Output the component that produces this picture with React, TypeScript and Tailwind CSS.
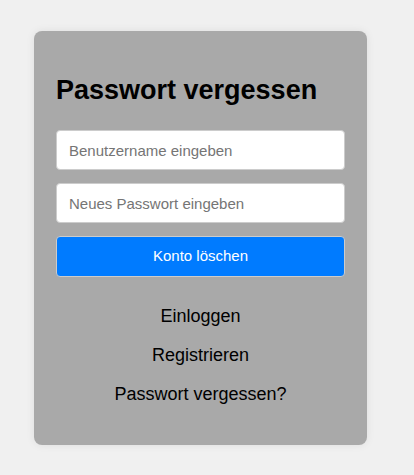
import React from 'react';

const font = { fontFamily: '"Liberation Sans", Arial, sans-serif' };

export default function App() {
  return (
    <div className="min-h-screen bg-[#f0f0f0] pt-[31px] pl-[34px]" style={font}>
      <div className="w-[333px] h-[414px] rounded-lg bg-[#a9a9a9] px-[22px] pt-[44px] shadow-[0_0_8px_rgba(0,0,0,0.08)]">
        <h2 className="text-[27px] leading-[31px] font-bold text-black">Passwort vergessen</h2>
        <form className="mt-[24px] flex flex-col gap-[13px]" onSubmit={(e) => e.preventDefault()}>
          <input
            type="text"
            placeholder="Benutzername eingeben"
            className="h-[40px] w-full rounded border border-[#cccccc] bg-white px-[12px] text-[15px] text-black placeholder:text-[#757575] outline-none"
          />
          <input
            type="password"
            placeholder="Neues Passwort eingeben"
            className="h-[40px] w-full rounded border border-[#cccccc] bg-white px-[12px] text-[15px] text-black placeholder:text-[#757575] outline-none"
          />
          <button
            type="submit"
            className="h-[41px] w-full rounded border border-[#cccccc] bg-[#007bff] text-[15px] text-white"
          >
            Konto löschen
          </button>
        </form>
        <div className="mt-[20px] flex flex-col items-center text-[18px] leading-[39px] text-black">
          <a href="#">Einloggen</a>
          <a href="#">Registrieren</a>
          <a href="#">Passwort vergessen?</a>
        </div>
      </div>
    </div>
  );
}
